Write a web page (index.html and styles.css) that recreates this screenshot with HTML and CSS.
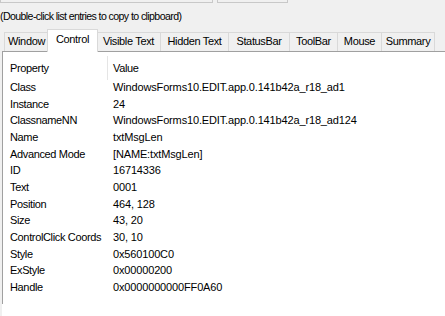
FILE: index.html
```html
<!DOCTYPE html>
<html lang="en">

<head>
  <meta charset="UTF-8">
  <title>Window Info - Control</title>
  <link rel="stylesheet" href="styles.css">
</head>

<body>

  <div class="topbar">
    <div class="field"></div>
    <div class="button"></div>
  </div>

  <p class="hint">(Double-click list entries to copy to clipboard)</p>

  <div class="tabs">
    <div class="tab">Window</div>
    <div class="tab selected">Control</div>
    <div class="tab">Visible Text</div>
    <div class="tab">Hidden Text</div>
    <div class="tab">StatusBar</div>
    <div class="tab">ToolBar</div>
    <div class="tab">Mouse</div>
    <div class="tab">Summary</div>
  </div>

  <main class="page">
    <div class="list">
      <div class="list-head">
        <div class="head-cell prop">Property</div>
        <div class="head-cell">Value</div>
      </div>
      <div class="rows">
        <div class="row"><span>Class</span><span>WindowsForms10.EDIT.app.0.141b42a_r18_ad1</span></div>
        <div class="row"><span>Instance</span><span>24</span></div>
        <div class="row"><span>ClassnameNN</span><span>WindowsForms10.EDIT.app.0.141b42a_r18_ad124</span></div>
        <div class="row"><span>Name</span><span>txtMsgLen</span></div>
        <div class="row"><span>Advanced Mode</span><span>[NAME:txtMsgLen]</span></div>
        <div class="row"><span>ID</span><span>16714336</span></div>
        <div class="row"><span>Text</span><span>0001</span></div>
        <div class="row"><span>Position</span><span>464, 128</span></div>
        <div class="row"><span>Size</span><span>43, 20</span></div>
        <div class="row"><span>ControlClick Coords</span><span>30, 10</span></div>
        <div class="row"><span>Style</span><span>0x560100C0</span></div>
        <div class="row"><span>ExStyle</span><span>0x00000200</span></div>
        <div class="row"><span>Handle</span><span>0x0000000000FF0A60</span></div>
      </div>
    </div>
  </main>

</body>

</html>
```

FILE: styles.css
```css
  body {
    margin: 0;
    background-color: #f0f0f0;
    font-family: "Liberation Sans", Arial, sans-serif;
    font-size: 11px;
    letter-spacing: -0.35px;
    color: #000;
    height: 316px;
    overflow: hidden;
  }

  .topbar {
    display: flex;
    gap: 4px;
    height: 3px;
  }

  .field {
    width: 211px;
    border: 1px solid #c8c8c8;
    border-top: none;
  }

  .button {
    width: 69px;
    border: 1px solid #c8c8c8;
    border-top: none;
  }

  .hint {
    margin: 7px 0 0;
    line-height: 13px;
    height: 19px;
    font-size: 10.6px;
    letter-spacing: -0.6px;
  }

  .tabs {
    display: grid;
    grid-template-columns: 44px 48px 64px 68px 61px 48px 44px 53px;
    margin-left: 5px;
    height: 22px;
    align-items: end;
  }

  .tab {
    height: 18px;
    line-height: 17px;
    text-align: center;
    border: 1px solid #d9d9d9;
    border-bottom: none;
    margin-left: -1px;
  }

  .tab.selected {
    height: 22px;
    line-height: 19px;
    background-color: #fff;
    margin: 0 -1px -1px -2px;
    position: relative;
    z-index: 1;
  }

  .page {
    margin-left: 2px;
    background-color: #fff;
    height: 265px;
  }

  .list {
    border-top: 1px solid #a0a0a0;
    border-left: 1px solid #a0a0a0;
    height: 252px;
  }

  .list-head {
    display: flex;
    height: 27px;
  }

  .head-cell {
    padding: 8px 0 0 5px;
    line-height: 16px;
  }

  .head-cell.prop {
    width: 97px;
    padding-left: 7px;
    margin-top: 4px;
    padding-top: 4px;
    height: 20px;
    border-right: 1px solid #e5e5e5;
  }

  .row {
    display: grid;
    grid-template-columns: 110px 1fr;
    height: 16.67px;
    line-height: 16.67px;
    white-space: nowrap;
  }

  .row span:first-child {
    padding-left: 7px;
  }

  .row span:last-child {
    letter-spacing: -0.15px;
  }
```
